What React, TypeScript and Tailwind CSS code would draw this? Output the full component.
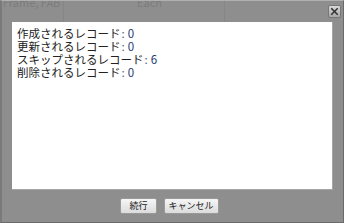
const rows = [
  { label: '作成されるレコード', value: 0 },
  { label: '更新されるレコード', value: 0 },
  { label: 'スキップされるレコード', value: 6 },
  { label: '削除されるレコード', value: 0 },
]

export default function App() {
  return (
    <div
      className="relative h-[223px] w-[344px] overflow-hidden bg-[#8e8e8e] text-[#222]"
      style={{ fontFamily: '"Noto Sans CJK JP", "Liberation Sans", sans-serif' }}
    >
      {/* faint table showing through the dialog */}
      <div className="absolute left-0 top-[-5px] flex h-[27px] w-full text-[11px] text-[#7c7c7c]">
        <div className="w-[64px] border-r border-[#868686] pl-[3px] leading-[14px]">Frame, FAB</div>
        <div className="w-[161px] border-r border-[#868686] pl-[73px] leading-[14px]">Each</div>
      </div>

      <div className="relative flex h-full flex-col border border-[#6a6a6a] border-l-2 border-l-[#7a7a7a] border-t-[#b0b0b0]">
        {/* title bar */}
        <div className="flex h-[21px] items-start justify-end pr-[2px] pt-[4px]">
          <button
            type="button"
            className="flex h-[13px] w-[13px] items-center justify-center rounded-[2px] border border-[#777] bg-gradient-to-b from-[#d8d8d8] to-[#a8a8a8]"
          >
            <svg viewBox="0 0 10 10" className="h-[9px] w-[9px]">
              <path d="M2 2 L8 8 M8 2 L2 8" stroke="#333" strokeWidth="1.8" strokeLinecap="square" />
            </svg>
          </button>
        </div>

        {/* content */}
        <div className="mx-[10px] flex-1 border-r border-b border-[#a6a6a6] bg-white px-[5px] pt-[5px] text-[11.5px]">
          {rows.map(r => (
            <div key={r.label} className="h-[13px] whitespace-nowrap leading-[13px]">
              {r.label}
              <span className="ml-[1px] mr-[3px] text-[#5a6478]">:</span>
              <span className="text-[#1d3b73]">{r.value}</span>
            </div>
          ))}
        </div>

        {/* buttons */}
        <div className="flex h-[32px] items-center justify-center gap-[7px] pb-[1px] pr-[6px]">
          <button
            type="button"
            className="h-[16px] rounded-[2px] border border-[#9a9a9a] bg-gradient-to-b from-[#f6f6f6] to-[#dcdcdc] px-[8px] text-[9px] leading-[14px] text-[#222]"
          >
            続行
          </button>
          <button
            type="button"
            className="h-[16px] rounded-[2px] border border-[#9a9a9a] bg-gradient-to-b from-[#f6f6f6] to-[#dcdcdc] px-[4px] text-[9px] leading-[14px] text-[#222]"
          >
            キャンセル
          </button>
        </div>
      </div>
    </div>
  )
}
